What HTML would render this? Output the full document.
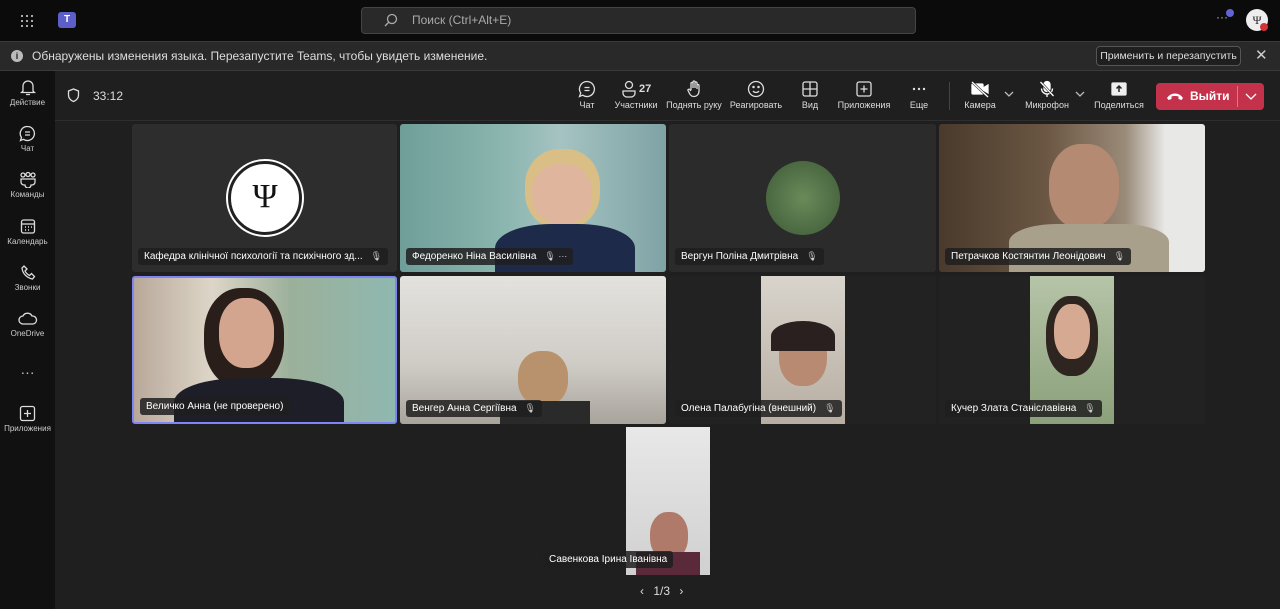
<!DOCTYPE html><html><head><meta charset="utf-8"><style>
*{box-sizing:border-box;margin:0;padding:0}
body{width:1280px;height:609px;overflow:hidden;background:#1f1f1f;font-family:"Liberation Sans",sans-serif;color:#fff;position:relative}
.a{position:absolute}
.top{left:0;top:0;width:1280px;height:41px;background:#0b0b0b}
.ban{left:0;top:41px;width:1280px;height:30px;background:#292929;border-top:1px solid #3a3a3a;border-bottom:1px solid #3a3a3a}
.side{left:0;top:71px;width:55px;height:538px;background:#111}
.sitem{position:absolute;left:0;width:55px;text-align:center;font-size:8px;color:#ccc}
.sitem svg,.tb svg{display:block;margin:0 auto 2px}
.bar{left:55px;top:71px;width:1225px;height:50px;background:#1f1f1f;border-bottom:1px solid #2e2e2e}
.tb{position:absolute;text-align:center;font-size:9px;color:#ddd;white-space:nowrap}
.tile{position:absolute;background:#2a2a2a;border-radius:3px;overflow:hidden}
.nm{position:absolute;left:6px;bottom:7px;background:rgba(30,30,30,.85);font-size:10px;padding:3px 6px;border-radius:3px;white-space:nowrap;color:#fff}
.mic{display:inline-block;margin-left:8px;font-size:9px;color:#ccc}
svg{fill:none;stroke:#ddd;stroke-width:1.3}
</style></head><body>
<div class="a top"></div>
<svg class="a" style="left:20px;top:14px" width="14" height="14"><g fill="#bbb" stroke="none"><circle cx="2" cy="2" r="1.1"/><circle cx="7" cy="2" r="1.1"/><circle cx="12" cy="2" r="1.1"/><circle cx="2" cy="7" r="1.1"/><circle cx="7" cy="7" r="1.1"/><circle cx="12" cy="7" r="1.1"/><circle cx="2" cy="12" r="1.1"/><circle cx="7" cy="12" r="1.1"/><circle cx="12" cy="12" r="1.1"/></g></svg>
<div class="a" style="left:58px;top:12px;width:18px;height:16px;background:#5b5fc7;border-radius:3px;font-size:10px;font-weight:bold;text-align:center;line-height:16px">T</div>
<div class="a" style="left:361px;top:7px;width:555px;height:27px;background:#292929;border:1px solid #444;border-radius:4px;font-size:12px;color:#aaa;line-height:25px;padding-left:50px">Поиск (Ctrl+Alt+E)</div>
<svg class="a" style="left:384px;top:13px" width="14" height="14"><circle cx="8" cy="6" r="4.5" stroke="#aaa"/><path d="M5 9L1 13" stroke="#aaa"/></svg>
<div class="a" style="left:1216px;top:10px;font-size:12px;color:#bbb">···</div>
<div class="a" style="left:1226px;top:9px;width:8px;height:8px;border-radius:50%;background:#6264d6"></div>
<div class="a" style="left:1246px;top:9px;width:22px;height:22px;border-radius:50%;background:#eee;color:#222;font-size:12px;text-align:center;line-height:22px;font-family:'Liberation Serif',serif">Ψ</div>
<div class="a" style="left:1260px;top:23px;width:8px;height:8px;border-radius:50%;background:#d13438"></div>
<div class="a ban"></div>
<div class="a" style="left:11px;top:50px;width:12px;height:12px;border-radius:50%;background:#bbb;color:#222;font-size:9px;text-align:center;line-height:12px;font-weight:bold">i</div>
<div class="a" style="left:32px;top:49px;font-size:12px;color:#ddd">Обнаружены изменения языка. Перезапустите Teams, чтобы увидеть изменение.</div>
<div class="a" style="left:1096px;top:46px;width:145px;height:20px;border:1px solid #555;border-radius:4px;background:#1f1f1f;font-size:10.5px;line-height:18px;text-align:center;color:#ddd;white-space:nowrap">Применить и перезапустить</div>
<div class="a" style="left:1255px;top:46px;font-size:15px;color:#ccc">✕</div>
<div class="a side"></div>
<div class="sitem" style="top:79px"><svg width="16" height="17"><path d="M3 12V7a5 5 0 0110 0v5l1.5 1.5h-13z M6 15.5h4"/></svg>Действие</div>
<div class="sitem" style="top:125px"><svg width="17" height="17"><path d="M8.5 1.5a7 7 0 11-4 12.8L1.5 15.5l1-3A7 7 0 018.5 1.5z M6 7h5M6 10h5"/></svg>Чат</div>
<div class="sitem" style="top:171px"><svg width="18" height="17"><circle cx="4" cy="4" r="2"/><circle cx="9" cy="3.5" r="2"/><circle cx="14" cy="4" r="2"/><path d="M2 8h14v3a3 3 0 01-3 3h-1a3 3 0 01-6 0H5a3 3 0 01-3-3z"/></svg>Команды</div>
<div class="sitem" style="top:218px"><svg width="16" height="17"><rect x="1.5" y="2" width="13" height="13" rx="2"/><path d="M1.5 6h13"/><path d="M5 9h1M8 9h1M11 9h1M5 12h1M8 12h1" stroke-width="1.5"/></svg>Календарь</div>
<div class="sitem" style="top:264px"><svg width="16" height="17"><path d="M4 2l3 3-2 2c1 2 2.5 3.5 4.5 4.5l2-2 3 3-2 2.5C7 14 2.5 9.5 2 4z"/></svg>Звонки</div>
<div class="sitem" style="top:311px"><svg width="20" height="16"><path d="M5 13a4 4 0 010-8 5 5 0 019 0 4 4 0 011 8z"/></svg>OneDrive</div>
<div class="sitem" style="top:364px;font-size:14px">···</div>
<div class="sitem" style="top:405px"><svg width="17" height="17"><rect x="1.5" y="1.5" width="14" height="14" rx="2"/><path d="M8.5 5v7M5 8.5h7"/></svg>Приложения</div>
<div class="a bar"></div>
<svg class="a" style="left:67px;top:88px" width="13" height="15"><path d="M6.5 1L1.5 3v4c0 3.5 2.5 5.5 5 6.5 2.5-1 5-3 5-6.5V3z"/></svg>
<div class="a" style="left:93px;top:89px;font-size:12px;color:#ddd">33:12</div>
<div class="tb" style="left:574px;top:80px;width:26px"><svg width="18" height="18"><path d="M9 1.5a7.5 7.5 0 11-4.3 13.7L1.5 16.5l1.2-3.4A7.5 7.5 0 019 1.5z M6.5 7.5h5M6.5 10.5h5"/></svg>Чат</div>
<div class="tb" style="left:612px;top:80px;width:48px"><div style="height:20px;position:relative"><svg class="a" style="left:9px;top:0" width="16" height="18"><circle cx="8" cy="5" r="3.5"/><path d="M2 11h12v2a4 4 0 01-4 4H6a4 4 0 01-4-4z"/></svg><b class="a" style="left:27px;top:3px;font-size:11px">27</b></div>Участники</div>
<div class="tb" style="left:664px;top:80px;width:60px"><svg width="16" height="18"><path d="M5 10V3.5a1 1 0 012 0V8M7 8V2a1 1 0 012 0v6M9 8V3a1 1 0 012 0v6M11 9V5.5a1 1 0 012 0V11c0 3-2 5.5-5 5.5-2 0-3.5-1-4.5-3L2 10.5a1 1 0 011.7-1L5 11"/></svg>Поднять руку</div>
<div class="tb" style="left:728px;top:80px;width:56px"><svg width="18" height="18"><circle cx="9" cy="9" r="7.5"/><path d="M6 11c1.5 2 4.5 2 6 0"/><circle cx="6.5" cy="7" r=".6" fill="#ddd"/><circle cx="11.5" cy="7" r=".6" fill="#ddd"/></svg>Реагировать</div>
<div class="tb" style="left:798px;top:80px;width:24px"><svg width="18" height="18"><rect x="2" y="2" width="14" height="14" rx="2"/><path d="M9 2v14M2 9h14"/></svg>Вид</div>
<div class="tb" style="left:836px;top:80px;width:56px"><svg width="18" height="18"><rect x="2" y="2" width="14" height="14" rx="2"/><path d="M9 5.5v7M5.5 9h7"/></svg>Приложения</div>
<div class="tb" style="left:906px;top:80px;width:26px"><svg width="18" height="18"><g fill="#ddd" stroke="none"><circle cx="4" cy="9" r="1.2"/><circle cx="9" cy="9" r="1.2"/><circle cx="14" cy="9" r="1.2"/></g></svg>Еще</div>
<div class="a" style="left:949px;top:82px;width:1px;height:28px;background:#444"></div>
<div class="tb" style="left:960px;top:80px;width:40px"><svg width="20" height="18" style="stroke:#fff"><rect x="2" y="4" width="11" height="10" rx="1" fill="#fff"/><path d="M13 8l5-3v8l-5-3" fill="#fff"/><path d="M1 1l17 16" stroke="#1f1f1f" stroke-width="2.5"/><path d="M2 2l16 15"/></svg>Камера</div>
<svg class="a" style="left:1004px;top:91px" width="10" height="7"><path d="M1 1l4 4 4-4" stroke="#bbb"/></svg>
<div class="tb" style="left:1020px;top:80px;width:54px"><svg width="18" height="18" style="stroke:#fff"><rect x="6" y="1.5" width="6" height="10" rx="3" fill="#fff"/><path d="M3.5 8.5a5.5 5.5 0 0011 0M9 14v3"/><path d="M2.5 2l13 14" stroke="#1f1f1f" stroke-width="2.5"/><path d="M2.5 2l13 14"/></svg>Микрофон</div>
<svg class="a" style="left:1075px;top:91px" width="10" height="7"><path d="M1 1l4 4 4-4" stroke="#bbb"/></svg>
<div class="tb" style="left:1092px;top:80px;width:54px"><svg width="18" height="18"><rect x="2" y="3" width="14" height="12" rx="1" fill="#eee" stroke="#eee"/><path d="M9 12V6M6.5 8.5L9 6l2.5 2.5" stroke="#222" stroke-width="1.5"/></svg>Поделиться</div>
<div class="a" style="left:1156px;top:83px;width:108px;height:27px;background:#c4314b;border-radius:4px;font-size:12px;font-weight:bold;line-height:27px;padding-left:34px">Выйти</div>
<div class="a" style="left:1237px;top:86px;width:1px;height:21px;background:#e07585"></div>
<svg class="a" style="left:1245px;top:93px" width="12" height="8"><path d="M1 1l5 5 5-5" stroke="#fff"/></svg>
<svg class="a" style="left:1166px;top:91px" width="18" height="10"><path d="M1 7c4-6 12-6 16 0l-1.5 2-3-1V5.5c-2-.7-5-.7-7 0V8l-3 1z" fill="#fff" stroke="none"/></svg>

<div class="tile" style="left:132px;top:124px;width:265px;height:148px;background:#2d2d2d"><div class="a" style="left:96px;top:37px;width:74px;height:74px;border-radius:50%;background:#fff;border:3px solid #222;outline:2px solid #fff;font-size:34px;color:#111;text-align:center;line-height:66px;font-family:'Liberation Serif',serif">Ψ</div><div class="nm">Кафедра клінічної психології та психічного зд...<span class="mic">🎙︎</span></div></div>
<div class="tile" style="left:400px;top:124px;width:266px;height:148px;background:linear-gradient(90deg,#6f9e98,#8cb6b0 40%,#a5c3c2 60%,#7fa3a5)"><div class="a" style="left:125px;top:25px;width:75px;height:80px;border-radius:45%;background:#d9bf85"></div><div class="a" style="left:132px;top:40px;width:60px;height:60px;border-radius:45%;background:#e0b59e"></div><div class="a" style="left:95px;top:100px;width:140px;height:60px;border-radius:40% 40% 0 0;background:#1d2a4a"></div><div class="nm">Федоренко Ніна Василівна<span class="mic">🎙︎ ···</span></div></div>
<div class="tile" style="left:669px;top:124px;width:267px;height:148px;background:#2b2b2b"><div class="a" style="left:97px;top:37px;width:74px;height:74px;border-radius:50%;background:radial-gradient(#6b8a5a,#3d5a36)"></div><div class="nm">Вергун Поліна Дмитрівна<span class="mic">🎙︎</span></div></div>
<div class="tile" style="left:939px;top:124px;width:266px;height:148px;background:linear-gradient(90deg,#4a3a2c,#6a5642 40%,#9a8a78 70%,#e8e8e6 85%)"><div class="a" style="left:110px;top:20px;width:70px;height:85px;border-radius:45%;background:#b58a72"></div><div class="a" style="left:70px;top:100px;width:160px;height:60px;background:#a9a08c;border-radius:30% 30% 0 0"></div><div class="nm">Петрачков Костянтин Леонідович<span class="mic">🎙︎</span></div></div>

<div class="tile" style="left:132px;top:276px;width:265px;height:148px;border:2px solid #7f85f5;background:linear-gradient(90deg,#b8a89a,#ddd6c8 30%,#9bb09a 60%,#8fb8b0)"><div class="a" style="left:70px;top:10px;width:80px;height:100px;border-radius:45%;background:#2a1e1a"></div><div class="a" style="left:85px;top:20px;width:55px;height:70px;border-radius:45%;background:#d4a58e"></div><div class="a" style="left:40px;top:100px;width:170px;height:60px;background:#1e1e28;border-radius:40% 40% 0 0"></div><div class="nm">Величко Анна (не проверено)</div></div>
<div class="tile" style="left:400px;top:276px;width:266px;height:148px;background:linear-gradient(180deg,#e4e2de,#cfccc6 60%,#a8a49c)"><div class="a" style="left:118px;top:75px;width:50px;height:55px;border-radius:45%;background:#b8926c"></div><div class="a" style="left:100px;top:125px;width:90px;height:30px;background:#2a2a2a"></div><div class="nm">Венгер Анна Сергіївна<span class="mic">🎙︎</span></div></div>
<div class="tile" style="left:669px;top:276px;width:267px;height:148px;background:#222"><div class="a" style="left:92px;top:0;width:84px;height:148px;background:linear-gradient(180deg,#d8d4cc,#b8aea2)"><div class="a" style="left:18px;top:50px;width:48px;height:60px;border-radius:45%;background:#b88a72"></div><div class="a" style="left:10px;top:45px;width:64px;height:30px;border-radius:50% 50% 0 0;background:#2a2020"></div></div><div class="nm">Олена Палабугіна (внешний)<span class="mic">🎙︎</span></div></div>
<div class="tile" style="left:939px;top:276px;width:266px;height:148px;background:#222"><div class="a" style="left:91px;top:0;width:84px;height:148px;background:linear-gradient(180deg,#b6c4a8,#8aa07a)"><div class="a" style="left:16px;top:20px;width:52px;height:80px;border-radius:45%;background:#2e2420"></div><div class="a" style="left:24px;top:28px;width:36px;height:55px;border-radius:45%;background:#d6aa92"></div></div><div class="nm">Кучер Злата Станіславівна<span class="mic">🎙︎</span></div></div>

<div class="tile" style="left:543px;top:427px;width:250px;height:148px;background:transparent"><div class="a" style="left:83px;top:0;width:84px;height:148px;background:linear-gradient(180deg,#e8e8e8,#d0d0d0)"><div class="a" style="left:24px;top:85px;width:38px;height:48px;border-radius:45%;background:#b07a6a"></div><div class="a" style="left:10px;top:125px;width:64px;height:30px;background:#5a2a3a"></div></div><div class="nm" style="left:0">Савенкова Ірина Іванівна</div></div>

<div class="a" style="left:640px;top:584px;font-size:12px;color:#ddd;word-spacing:6px">‹ 1/3 ›</div>
</body></html>
